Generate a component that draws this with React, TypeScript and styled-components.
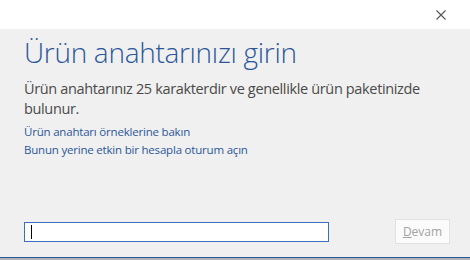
import React from "react";
import styled, { createGlobalStyle } from "styled-components";

const GlobalStyle = createGlobalStyle`
    html, body {
        margin: 0;
        padding: 0;
        background: #f0f0f0;
    }
    body {
        font-family: "Open Sans", "Noto Sans", sans-serif;
    }
`;

const App = () => {
    return (
        <Dialog>
            <GlobalStyle />
            <Header>
                <CloseButton aria-label="Kapat">
                    <svg width="10" height="10" viewBox="0 0 10 10">
                        <path d="M0.5 0.5 L9.5 9.5 M9.5 0.5 L0.5 9.5" stroke="#555" strokeWidth="1.1" fill="none" />
                    </svg>
                </CloseButton>
            </Header>
            <Body>
                <Title>Ürün anahtarınızı girin</Title>
                <Description>Ürün anahtarınız 25 karakterdir ve genellikle ürün paketinizde bulunur.</Description>
                <Links>
                    <Link href="#">Ürün anahtarı örneklerine bakın</Link>
                    <Link href="#">Bunun yerine etkin bir hesapla oturum açın</Link>
                </Links>
            </Body>
            <Footer>
                <InputBox>
                    <KeyInput />
                    <Caret />
                </InputBox>
                <NextButton disabled>
                    <u>D</u>evam
                </NextButton>
            </Footer>
        </Dialog>
    );
};

export default App;

const Dialog = styled.div`
    display: flex;
    flex-direction: column;
    width: 470px;
    height: 260px;
    background: #f0f0f0;
    box-sizing: border-box;
    border-bottom: 2px solid #b4b4b4;
    position: relative;
    &::after {
        content: "";
        position: absolute;
        left: 0;
        right: 0;
        bottom: 0;
        height: 1px;
        background: #2b579a;
    }
`;

const Header = styled.div`
    display: flex;
    justify-content: flex-end;
    align-items: center;
    height: 29px;
    background: #ffffff;
    padding-right: 22px;
`;

const CloseButton = styled.button`
    display: flex;
    align-items: center;
    justify-content: center;
    width: 14px;
    height: 14px;
    padding: 0;
    border: none;
    background: transparent;
    margin-top: 1px;
`;

const Body = styled.div`
    display: flex;
    flex-direction: column;
    padding: 0 20px 0 24px;
    flex: 1;
`;

const Title = styled.div`
    color: #2b579a;
    font-size: 28px;
    font-weight: 300;
    letter-spacing: -0.3px;
    line-height: 40px;
    margin-top: 3px;
`;

const Description = styled.div`
    color: #4a4a4a;
    font-size: 14.5px;
    letter-spacing: -0.35px;
    line-height: 20px;
    margin-top: 7px;
    max-width: 410px;
`;

const Links = styled.div`
    display: flex;
    flex-direction: column;
    margin-top: 4px;
`;

const Link = styled.a`
    color: #2b579a;
    font-size: 11.5px;
    letter-spacing: -0.2px;
    line-height: 18px;
    text-decoration: none;
`;

const Footer = styled.div`
    display: flex;
    align-items: center;
    justify-content: space-between;
    padding: 0 20px 14px 24px;
`;

const InputBox = styled.div`
    position: relative;
    display: flex;
`;

const KeyInput = styled.input`
    width: 305px;
    height: 20px;
    box-sizing: border-box;
    border: 1px solid #3c6ec0;
    background: #ffffff;
    padding: 0 6px;
    font-family: "Open Sans", sans-serif;
    font-size: 13px;
    outline: none;
`;

const Caret = styled.span`
    position: absolute;
    left: 7px;
    top: 3px;
    width: 1px;
    height: 14px;
    background: #000000;
`;

const NextButton = styled.button`
    width: 55px;
    height: 25px;
    box-sizing: border-box;
    border: 1px solid #e1e1e1;
    background: #fbfbfb;
    color: #a3a3a3;
    font-family: "Open Sans", sans-serif;
    font-size: 12px;
    padding: 0;
    u {
        text-decoration-color: #a3a3a3;
    }
`;
